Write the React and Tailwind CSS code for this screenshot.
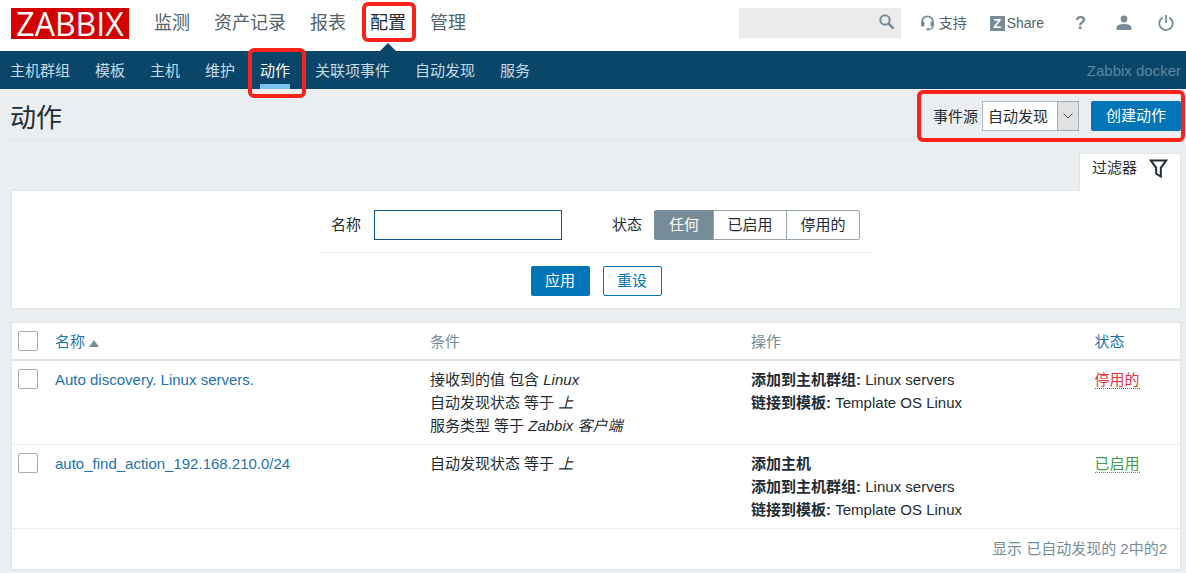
import React from 'react';
import clsx from 'clsx';

const mainMenu = ['监测', '资产记录', '报表', '配置', '管理'];
const subMenu = ['主机群组', '模板', '主机', '维护', '动作', '关联项事件', '自动发现', '服务'];
const statusFilter = ['任何', '已启用', '停用的'];

const actions = [
  {
    name: 'Auto discovery. Linux servers.',
    conditions: [
      { label: '接收到的值 包含', value: 'Linux' },
      { label: '自动发现状态 等于', value: '上' },
      { label: '服务类型 等于', value: 'Zabbix 客户端' },
    ],
    operations: [
      { label: '添加到主机群组:', value: 'Linux servers' },
      { label: '链接到模板:', value: 'Template OS Linux' },
    ],
    enabled: false,
  },
  {
    name: 'auto_find_action_192.168.210.0/24',
    conditions: [{ label: '自动发现状态 等于', value: '上' }],
    operations: [
      { label: '添加主机', value: '' },
      { label: '添加到主机群组:', value: 'Linux servers' },
      { label: '链接到模板:', value: 'Template OS Linux' },
    ],
    enabled: true,
  },
];

/* Red frame drawn around a highlighted element */
const Highlight = ({ className }) => (
  <span
    aria-hidden="true"
    className={clsx('absolute z-10 border-4 border-[#f9231b] rounded-md pointer-events-none', className)}
  />
);

const SearchIcon = () => (
  <svg width="16" height="16" viewBox="0 0 16 16" fill="none" stroke="#768d99">
    <circle cx="6" cy="6" r="4.7" strokeWidth="2" />
    <path d="M9.6 9.6l5 5" strokeWidth="2.6" />
  </svg>
);

const SupportIcon = () => (
  <svg width="15" height="16" viewBox="0 0 15 16" fill="none" stroke="#768d99">
    <path d="M2 8V6.8a5.5 5.5 0 0 1 11 0V8" strokeWidth="1.8" />
    <path d="M13 10.5c0 2.4-1.5 3.6-4 3.9" strokeWidth="1.3" />
    <rect x="1" y="6.6" width="3.4" height="5" rx="1" fill="#768d99" stroke="none" />
    <rect x="10.6" y="6.6" width="3.4" height="5" rx="1" fill="#768d99" stroke="none" />
    <rect x="6.4" y="13.2" width="3.4" height="2.4" rx="1" fill="#768d99" stroke="none" />
  </svg>
);

const UserIcon = () => (
  <svg width="16" height="16" viewBox="0 0 16 16" fill="#768d99">
    <circle cx="8" cy="4" r="3.4" />
    <path d="M.5 15v-2.2C.5 10.4 4 9 8 9s7.5 1.4 7.5 3.8V15z" />
  </svg>
);

const PowerIcon = () => (
  <svg width="16" height="16" viewBox="0 0 16 16" fill="none" stroke="#768d99" strokeWidth="1.8">
    <path d="M4.6 2.6a6.700 6.700 0 1 0 6.800 0" />
    <path d="M8 0v8" />
  </svg>
);

const FilterIcon = () => (
  <svg width="19" height="19" viewBox="0 0 19 19" fill="none" stroke="#1f2c33" strokeWidth="2">
    <path d="M1.8 1.5h15.400l-5.400 7.300v8.700l-4.600-2.700V8.800z" />
  </svg>
);

const Header = () => (
  <header className="flex items-start h-[51px] bg-white pl-[11px] pr-3">
    <a
      href="#home"
      className="mt-2 w-[118px] h-[31px] bg-[#d40000] text-white text-[32px] leading-[31px] text-center font-['Open_Sans',sans-serif] font-medium shrink-0"
    >
      ZABBIX
    </a>
    <nav className="ml-[13px]">
      <ul className="flex">
        {mainMenu.map((item) => {
          const active = item === '配置';
          return (
            <li key={item} className="relative h-[51px] px-3 whitespace-nowrap">
              <a
                href="#menu"
                className={clsx('block text-lg leading-[46px]', active ? 'text-[#1f2c33]' : 'text-[#52636c]')}
              >
                {item}
              </a>
              {active && (
                <>
                  <span className="absolute bottom-0 left-1/2 -translate-x-1/2 border-x-8 border-b-8 border-x-transparent border-b-[#0a466a]" />
                  <Highlight className="left-1 right-[2px] top-[2px] bottom-[9px]" />
                </>
              )}
            </li>
          );
        })}
      </ul>
    </nav>
    <div className="ml-auto flex items-center h-[46px] text-sm text-[#52636c] shrink-0">
      <form className="relative mr-[19px]">
        <input
          type="text"
          aria-label="Search"
          className="block w-[162px] h-[30px] bg-[#ebebeb] pl-2 pr-8 outline-none"
        />
        <button type="button" aria-label="Search" className="absolute right-[6px] top-[6px]">
          <SearchIcon />
        </button>
      </form>
      <a href="#support" className="flex items-center gap-1 mr-[23px]">
        <SupportIcon />
        支持
      </a>
      <a href="#share" className="flex items-center gap-[2px] mr-[31px]">
        <span className="w-[15px] h-[15px] bg-[#768d99] text-white text-[13px] leading-[15px] font-bold text-center rounded-[1px]">
          Z
        </span>
        Share
      </a>
      <a href="#help" className="mr-[30px] text-lg font-bold text-[#768d99]">?</a>
      <a href="#profile" aria-label="Profile" className="mr-[26px]"><UserIcon /></a>
      <a href="#logout" aria-label="Sign out"><PowerIcon /></a>
    </div>
  </header>
);

const SubNav = () => (
  <nav className="flex justify-between h-[38px] bg-[#0a466a] pl-[10px] pr-[5px] leading-[40px]">
    <ul className="flex gap-[25px] h-full whitespace-nowrap">
      {subMenu.map((item) => {
        const active = item === '动作';
        return (
          <li key={item} className="relative">
            <a href="#submenu" className={clsx('block h-full', active ? 'text-white' : 'text-[#c8dbe8]')}>
              {item}
            </a>
            {active && (
              <>
                <span className="absolute inset-x-0 bottom-0 h-[5px] bg-[#7ec2f3]" />
                <Highlight className="-left-3 -right-4 -top-[3px] -bottom-[9px]" />
              </>
            )}
          </li>
        );
      })}
    </ul>
    <span className="text-[#5c87a1]">Zabbix docker</span>
  </nav>
);

const PageTitle = () => (
  <div className="flex items-center justify-between h-[52px] ml-[10px] mr-[5px] pt-[2px] border-b border-[#dfe4e7]">
    <h1 className="pt-1 text-[26px] leading-[46px]">动作</h1>
    <form className="relative flex items-center">
      <label htmlFor="source" className="mr-1 pt-1">事件源</label>
      <div className="relative mr-3">
        <select
          id="source"
          className="block appearance-none w-[97px] h-[30px] pl-[5px] pt-1 bg-white border border-[#acbbc2]"
        >
          <option>自动发现</option>
        </select>
        <span className="absolute right-0 inset-y-0 w-[22px] flex items-center justify-center bg-[#e1e1e1] border border-[#a5abae] pointer-events-none">
          <svg width="10" height="6" viewBox="0 0 10 6" fill="none" stroke="#444">
            <path d="M.5.5L5 5 9.5.5" />
          </svg>
        </span>
      </div>
      <button type="button" className="w-[90px] h-[30px] pt-[2px] rounded-xs bg-[#0275b8] text-white">
        创建动作
      </button>
      <Highlight className="-left-4 -right-1 -top-[11px] -bottom-[11px]" />
    </form>
  </div>
);

const Filter = () => (
  <section className="mt-3">
    <div className="flex justify-end">
      <button
        type="button"
        className="relative -mb-px flex items-center gap-3 h-[38px] px-3 pb-2 bg-white border border-b-0 border-[#dfe4e7]"
      >
        过滤器
        <FilterIcon />
      </button>
    </div>
    <form className="bg-white border border-[#dfe4e7] pt-[19px] pb-3">
      <div className="w-[552px] mx-auto flex items-center px-[11px] pb-3 border-b border-[#ebeef0]">
        <label htmlFor="name" className="w-[43px]">名称</label>
        <input id="name" type="text" className="w-[188px] h-[30px] px-1 border border-[#0f5a8a] outline-none" />
        <fieldset className="flex items-center ml-[50px]">
          <legend className="float-left w-[42px] leading-[30px]">状态</legend>
          <div className="flex">
            {statusFilter.map((item, i) => (
              <label
                key={item}
                className="w-[74px] h-[30px] leading-[28px] text-center border border-[#97a5ad] -ml-px first:ml-0 first:w-[60px] first:rounded-l-xs last:rounded-r-xs has-checked:bg-[#768d99] has-checked:border-[#768d99] has-checked:text-white"
              >
                <input type="radio" name="status" defaultChecked={i === 0} className="sr-only" />
                {item}
              </label>
            ))}
          </div>
        </fieldset>
      </div>
      <div className="flex justify-center gap-[13px] pt-[13px]">
        <button type="button" className="w-[59px] h-[30px] rounded-xs bg-[#0275b8] text-white">应用</button>
        <button type="button" className="w-[59px] h-[30px] rounded-xs bg-white border border-[#0275b8] text-[#0275b8]">
          重设
        </button>
      </div>
    </form>
  </section>
);

const Checkbox = ({ label }) => (
  <input
    type="checkbox"
    aria-label={label}
    className="block appearance-none w-5 h-5 bg-white border border-[#acacac] rounded-xs"
  />
);

const ActionTable = () => (
  <section className="mt-[13px] bg-white border border-[#dfe4e7]">
    <table className="w-full table-fixed text-left leading-[23px]">
      <colgroup>
        <col className="w-[38px]" />
        <col className="w-[32.1%]" />
        <col className="w-[27.5%]" />
        <col className="w-[29.4%]" />
        <col />
      </colgroup>
      <thead>
        <tr className="h-[37px] border-b-2 border-[#dfe4e7] text-[#768d99]">
          <th className="pl-[6px]"><Checkbox label="Select all" /></th>
          <th className="px-[5px] font-normal">
            <a href="#sort" className="flex items-center gap-1 text-[#1f73ad]">
              名称
              <span className="mt-1 border-x-[5px] border-b-[7px] border-x-transparent border-b-[#768d99]" />
            </a>
          </th>
          <th className="px-[5px] font-normal">条件</th>
          <th className="px-[5px] font-normal">操作</th>
          <th className="px-[5px] font-normal"><a href="#sort" className="text-[#1f73ad]">状态</a></th>
        </tr>
      </thead>
      <tbody>
        {actions.map((action) => (
          <tr key={action.name} className="align-top border-b border-[#ebeef0]">
            <td className="pl-[6px] pt-2"><Checkbox label={action.name} /></td>
            <td className="px-[5px] py-[7px]">
              <a href="#action" className="text-[#1f73ad]">{action.name}</a>
            </td>
            <td className="px-[5px] py-[7px]">
              {action.conditions.map((c) => (
                <div key={c.label}>
                  {c.label} <em>{c.value}</em>
                </div>
              ))}
            </td>
            <td className="px-[5px] py-[7px]">
              {action.operations.map((o) => (
                <div key={o.label}>
                  <b>{o.label}</b> {o.value}
                </div>
              ))}
            </td>
            <td className="px-[5px] py-[7px]">
              <a
                href="#status"
                className={clsx(
                  'border-b border-dotted',
                  action.enabled ? 'text-[#429e47] border-[#429e47]' : 'text-[#e33734] border-[#e33734]'
                )}
              >
                {action.enabled ? '已启用' : '停用的'}
              </a>
            </td>
          </tr>
        ))}
      </tbody>
    </table>
    <p className="pr-[13px] text-right leading-[40px] text-[#768d99]">显示 已自动发现的 2中的2</p>
  </section>
);

const App = () => (
  <div className="min-h-screen bg-[#ebeef0] text-[#1f2c33] text-[15px] font-['Liberation_Sans','Noto_Sans_CJK_SC',sans-serif]">
    <Header />
    <SubNav />
    <main>
      <PageTitle />
      <div className="ml-[11px] mr-[5px]">
        <Filter />
        <ActionTable />
      </div>
    </main>
  </div>
);

export default App;
